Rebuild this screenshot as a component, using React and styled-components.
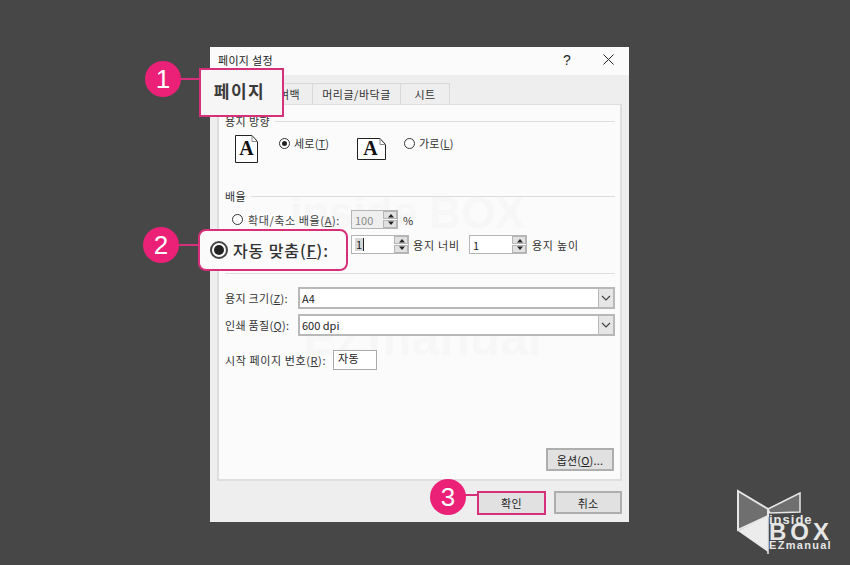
import styled, { createGlobalStyle } from "styled-components";

const PINK = "#d6307a";
const FONT = `"Noto Sans CJK KR", "Noto Sans", sans-serif`;

const Global = createGlobalStyle`
  html, body { margin: 0; padding: 0; height: 100%; background: #474747; overflow: hidden; }
  body { font-family: ${FONT}; color: #222; }
`;

const Page = styled.div`
  position: relative;
  width: 850px;
  height: 565px;
  padding: 47px 0 0 210px;
  box-sizing: border-box;
`;

const Dialog = styled.div`
  position: relative;
  width: 419px;
  height: 475px;
  background: #eeeeee;
  display: flex;
  flex-direction: column;
  font-size: 11px;
  line-height: 14px;
`;

const TitleBar = styled.div`
  height: 28px;
  box-sizing: border-box;
  flex: none;
  background: #fbfbfb;
  display: flex;
  align-items: center;
  padding: 0 15px 3px 8px;
  font-size: 11px;
  letter-spacing: 0.3px;
`;

const TitleText = styled.span`
  flex: 1;
`;

const TitleIcon = styled.span`
  width: 20px;
  margin-right: 26px;
  display: flex;
  justify-content: center;
  font-size: 14px;
  font-family: "Liberation Sans", sans-serif;
`;

const TabStrip = styled.div`
  height: 29px;
  flex: none;
  display: flex;
  align-items: flex-end;
  padding-left: 60px;
`;

const Tab = styled.div`
  width: ${(p) => p.$w}px;
  height: 21px;
  box-sizing: border-box;
  background: #eeeeee;
  border: 1px solid #d9d9d9;
  border-bottom: 0;
  border-left: 0;
  display: flex;
  align-items: center;
  justify-content: center;
  padding-right: ${(p) => p.$pr || 0}px;
  letter-spacing: 0.5px;
  color: #333;
`;

const Panel = styled.div`
  position: relative;
  isolation: isolate;
  width: 405px;
  height: 377px;
  margin-left: 7px;
  box-sizing: border-box;
  background: #fbfbfb;
  border: 2px solid #dedede;
  border-top-width: 1px;
  padding: 9px 5px 0 6px;
  flex: none;
`;

const GroupTitle = styled.div`
  display: flex;
  align-items: center;
  gap: 5px;
  height: 14px;
  color: #333;
  letter-spacing: 0.4px;
  margin-bottom: ${(p) => p.$after}px;
`;

const Rule = styled.div`
  flex: 1;
  height: 1px;
  background: #dcdcdc;
`;

const Orientation = styled.div`
  display: flex;
  align-items: flex-start;
  padding-left: 10px;
  height: 54px;
`;

const PaperIcon = styled.svg`
  flex: none;
  display: block;
  margin-top: ${(p) => p.$top}px;
  margin-right: ${(p) => p.$gap}px;
`;

const RadioLabel = styled.label`
  display: flex;
  align-items: center;
  gap: 4px;
  height: 14px;
  margin-top: 1px;
  width: ${(p) => (p.$w ? `${p.$w}px` : "auto")};
  flex: none;
  letter-spacing: 0.2px;
  color: #333;
`;

const Radio = styled.span`
  width: 11px;
  height: 11px;
  box-sizing: border-box;
  border-radius: 50%;
  border: 1px solid #333;
  background: #fff;
  flex: none;
  display: flex;
  align-items: center;
  justify-content: center;
  &::after {
    content: "";
    width: 5px;
    height: 5px;
    border-radius: 50%;
    background: ${(p) => (p.$on ? "#222" : "transparent")};
  }
`;

const U = styled.span`
  text-decoration: underline;
`;

const ScaleRow = styled.div`
  display: flex;
  align-items: center;
  height: 19px;
  margin-top: ${(p) => p.$top}px;
  padding-left: ${(p) => p.$left}px;
`;

const ScaleLabel = styled(RadioLabel)`
  width: 119px;
  margin: 0;
  gap: 5px;
  letter-spacing: 0.6px;
  color: #444;
`;

const Spin = styled.div`
  width: ${(p) => p.$w}px;
  height: 19px;
  box-sizing: border-box;
  border: 1px solid #b5b5b5;
  background: ${(p) => (p.$off ? "#efefef" : "#fff")};
  color: ${(p) => (p.$off ? "#8a8a8a" : "#222")};
  display: flex;
  align-items: center;
  justify-content: space-between;
  padding-left: 3px;
  flex: none;
`;

const Caret = styled.span`
  border-right: 1px solid #222;
  background: #d8d8d8;
  padding: 0 1px;
  height: 13px;
  line-height: 13px;
`;

const SpinButtons = styled.div`
  width: 14px;
  height: 100%;
  display: flex;
  flex-direction: column;
  gap: 1px;
  background: #fff;
  &::before, &::after {
    content: "";
    flex: 1;
    background: #e1e1e1;
    border: 1px solid #b5b5b5;
  }
`;

const SpinArrows = styled.svg`
  position: absolute;
  right: 0;
  top: 0;
  pointer-events: none;
`;

const SpinWrap = styled.div`
  position: relative;
  flex: none;
  display: flex;
  margin-right: ${(p) => p.$gap}px;
`;

const Hint = styled.span`
  color: #333;
  letter-spacing: 0.8px;
  margin-right: ${(p) => p.$gap || 0}px;
  flex: none;
`;

const Divider = styled.div`
  height: 1px;
  background: #dcdcdc;
  margin: 19px 0 13px;
`;

const FieldRow = styled.div`
  display: flex;
  align-items: center;
  height: 22px;
  margin-bottom: ${(p) => p.$after || 0}px;
`;

const FieldLabel = styled.span`
  width: ${(p) => p.$w}px;
  flex: none;
  letter-spacing: ${(p) => p.$ls || 0.3}px;
  color: #333;
`;

const Select = styled.div`
  flex: 1;
  height: 22px;
  box-sizing: border-box;
  border: 2px solid #b8b8b8;
  background: #fff;
  display: flex;
  align-items: center;
  justify-content: space-between;
  padding-left: 2px;
`;

const SelectArrow = styled.div`
  width: 14px;
  height: 100%;
  background: #e6e6e6;
  border-left: 1px solid #b8b8b8;
  display: flex;
  align-items: center;
  justify-content: center;
`;

const StartInput = styled.div`
  width: 44px;
  height: 20px;
  box-sizing: border-box;
  border: 1px solid #aaa;
  background: #fff;
  padding-left: 4px;
  line-height: 15px;
  letter-spacing: 0.5px;
`;

const Button = styled.div`
  width: ${(p) => p.$w}px;
  height: 23px;
  box-sizing: border-box;
  background: #e1e1e1;
  border: 2px solid #aeaeae;
  display: flex;
  align-items: center;
  justify-content: center;
  letter-spacing: 0.2px;
  flex: none;
  color: #222;
`;

const OptionBar = styled.div`
  display: flex;
  justify-content: flex-end;
  margin-top: 77px;
  padding-right: 1px;
`;

const Footer = styled.div`
  display: flex;
  justify-content: flex-end;
  gap: 9px;
  padding: 10px 7px 0 0;
`;

const Watermark = styled.div`
  position: absolute;
  z-index: -1;
  left: ${(p) => p.$x}px;
  top: ${(p) => p.$y}px;
  font: bold ${(p) => p.$size}px/1 "Liberation Sans", sans-serif;
  color: #f7f7f7;
  white-space: nowrap;
`;

const Badge = styled.div`
  position: absolute;
  left: ${(p) => p.$x}px;
  top: ${(p) => p.$y}px;
  width: 36px;
  height: 36px;
  border-radius: 50%;
  background: #eb2178;
  color: #fff;
  display: flex;
  align-items: center;
  justify-content: center;
  font: 26px "Liberation Sans", sans-serif;
`;

const Leader = styled.div`
  position: absolute;
  left: ${(p) => p.$x}px;
  top: ${(p) => p.$y}px;
  width: ${(p) => p.$w}px;
  height: 2px;
  background: ${PINK};
`;

const TabHighlight = styled.div`
  position: absolute;
  left: 199px;
  top: 68px;
  width: 85px;
  height: 49px;
  box-sizing: border-box;
  border: 2px solid ${PINK};
  background: #f6f6f6;
  display: flex;
  align-items: center;
  justify-content: center;
  font-size: 17px;
  font-weight: 700;
  letter-spacing: 1.5px;
  color: #3a3a3a;
  padding: 0 4px 4px 0;
`;

const AutoFit = styled.div`
  position: absolute;
  left: 198px;
  top: 229px;
  width: 150px;
  height: 42px;
  box-sizing: border-box;
  border: 2px solid ${PINK};
  border-radius: 8px;
  background: #fbfbfb;
  display: flex;
  align-items: center;
  gap: 5px;
  padding-left: 10px;
  font-size: 16px;
  font-weight: 500;
  letter-spacing: 0.9px;
  color: #333;
`;

const BigRadio = styled.span`
  width: 18px;
  height: 18px;
  box-sizing: border-box;
  border: 2px solid #444;
  border-radius: 50%;
  display: flex;
  align-items: center;
  justify-content: center;
  flex: none;
  &::after {
    content: "";
    width: 10px;
    height: 10px;
    border-radius: 50%;
    background: #222;
  }
`;

const OkHighlight = styled.div`
  position: absolute;
  left: 477px;
  top: 491px;
  width: 69px;
  height: 24px;
  box-sizing: border-box;
  border: 2px solid ${PINK};
  background: #e1e1e1;
  display: flex;
  align-items: center;
  justify-content: center;
  font-size: 11px;
  letter-spacing: 0.3px;
  color: #222;
`;

const Logo = styled.div`
  position: absolute;
  left: 735px;
  top: 488px;
  width: 100px;
  height: 68px;
`;

const LogoText = styled.div`
  position: absolute;
  left: ${(p) => p.$x}px;
  top: ${(p) => p.$y}px;
  font: 900 ${(p) => p.$size}px/1 "Liberation Sans", sans-serif;
  letter-spacing: ${(p) => p.$ls}px;
  color: #e6e6e6;
  white-space: nowrap;
`;

const A = ({ w, h, top, gap, landscape }) => (
  <PaperIcon width={w} height={h} viewBox={`0 0 ${w} ${h}`} $top={top} $gap={gap}>
    <path
      d={`M.5.5H${w - 6}L${w - 0.5} 6.5V${h - 0.5}H.5Z`}
      fill="#fff"
      stroke="#222"
    />
    <path d={`M${w - 6} .5V6.5H${w - 0.5}`} fill="none" stroke="#888" />
    <text
      x={w / 2 - (landscape ? 1 : 0)}
      y={h - (landscape ? 5 : 8)}
      textAnchor="middle"
      fontFamily="Liberation Serif, serif"
      fontWeight="700"
      fontSize="20"
      fill="#111"
    >
      A
    </text>
  </PaperIcon>
);

const SpinBox = ({ w, gap, off, children }) => (
  <SpinWrap $gap={gap}>
    <Spin $w={w} $off={off}>
      {children}
      <SpinButtons />
    </Spin>
    <SpinArrows width="14" height="19" viewBox="0 0 14 19">
      <path d="M7 4 10 7.5H4ZM7 15 10 11.5H4Z" fill="#222" />
    </SpinArrows>
  </SpinWrap>
);

const Chevron = () => (
  <svg width="10" height="6" viewBox="0 0 10 6">
    <path d="M1 1 5 5 9 1" fill="none" stroke="#444" strokeWidth="1.2" />
  </svg>
);

export default function App() {
  return (
    <Page>
      <Global />
      <Dialog>
        <TitleBar>
          <TitleText>페이지 설정</TitleText>
          <TitleIcon>?</TitleIcon>
          <svg width="11" height="11" viewBox="0 0 11 11">
            <path d="M.5.5 10.5 10.5M10.5.5.5 10.5" stroke="#222" fill="none" />
          </svg>
        </TitleBar>
        <TabStrip>
          <Tab $w={43} $pr={3}>여백</Tab>
          <Tab $w={88}>머리글/바닥글</Tab>
          <Tab $w={49}>시트</Tab>
        </TabStrip>
        <Panel>
          <Watermark $x={71} $y={86} $size={44}>inside BOX</Watermark>
          <Watermark $x={84} $y={208} $size={50}>EZmanual</Watermark>
          <GroupTitle $after={7}>
            용지 방향
            <Rule />
          </GroupTitle>
          <Orientation>
            <A w={23} h={28} top={0} gap={21} />
            <RadioLabel $w={78}>
              <Radio $on />
              <span>세로(<U>T</U>)</span>
            </RadioLabel>
            <A w={29} h={22} top={3} gap={18} landscape />
            <RadioLabel>
              <Radio />
              <span>가로(<U>L</U>)</span>
            </RadioLabel>
          </Orientation>
          <GroupTitle $after={7}>
            배율
            <Rule />
          </GroupTitle>
          <ScaleRow $top={0} $left={7}>
            <ScaleLabel>
              <Radio />
              <span>확대/축소 배율(<U>A</U>):</span>
            </ScaleLabel>
            <SpinBox w={47} gap={5} off>100</SpinBox>
            <Hint>%</Hint>
          </ScaleRow>
          <ScaleRow $top={6} $left={126}>
            <SpinBox w={58} gap={4}>
              <Caret>1</Caret>
            </SpinBox>
            <Hint $gap={9}>용지 너비</Hint>
            <SpinBox w={58} gap={5}>1</SpinBox>
            <Hint>용지 높이</Hint>
          </ScaleRow>
          <Divider />
          <FieldRow $after={5}>
            <FieldLabel $w={73}>용지 크기(<U>Z</U>):</FieldLabel>
            <Select>
              A4
              <SelectArrow><Chevron /></SelectArrow>
            </Select>
          </FieldRow>
          <FieldRow $after={13}>
            <FieldLabel $w={73}>인쇄 품질(<U>Q</U>):</FieldLabel>
            <Select>
              600 dpi
              <SelectArrow><Chevron /></SelectArrow>
            </Select>
          </FieldRow>
          <FieldRow>
            <FieldLabel $w={108} $ls={0.6}>시작 페이지 번호(<U>R</U>):</FieldLabel>
            <StartInput>자동</StartInput>
          </FieldRow>
          <OptionBar>
            <Button $w={68}>
              <span>옵션(<U>O</U>)...</span>
            </Button>
          </OptionBar>
        </Panel>
        <Footer>
          <Button $w={68}>확인</Button>
          <Button $w={68}>취소</Button>
        </Footer>
      </Dialog>

      <TabHighlight>페이지</TabHighlight>
      <AutoFit>
        <BigRadio />
        <span>자동 맞춤(<U>F</U>):</span>
      </AutoFit>
      <OkHighlight>확인</OkHighlight>

      <Leader $x={180} $y={78} $w={20} />
      <Leader $x={178} $y={244} $w={21} />
      <Leader $x={465} $y={494} $w={13} />
      <Badge $x={145} $y={61}>1</Badge>
      <Badge $x={143} $y={227}>2</Badge>
      <Badge $x={430} $y={479}>3</Badge>

      <Logo>
        <svg width="70" height="68" viewBox="0 0 70 68">
          <path d="M3 3 33 21V28L3 42Z" fill="#6f6f6f" stroke="#e6e6e6" strokeWidth="2" />
          <path d="M3 43 33 28V64Z" fill="#ececec" />
          <path d="M33 21 65 5V24L35 25Z" fill="#6f6f6f" stroke="#e6e6e6" strokeWidth="1.5" />
          <path d="M33 20V66" stroke="#e6e6e6" strokeWidth="1.5" />
        </svg>
        <LogoText $x={34} $y={25} $size={13} $ls={1}>inside</LogoText>
        <LogoText $x={34} $y={32} $size={24} $ls={4}>BOX</LogoText>
        <LogoText $x={34} $y={52} $size={11} $ls={1.3}>EZmanual</LogoText>
      </Logo>
    </Page>
  );
}
